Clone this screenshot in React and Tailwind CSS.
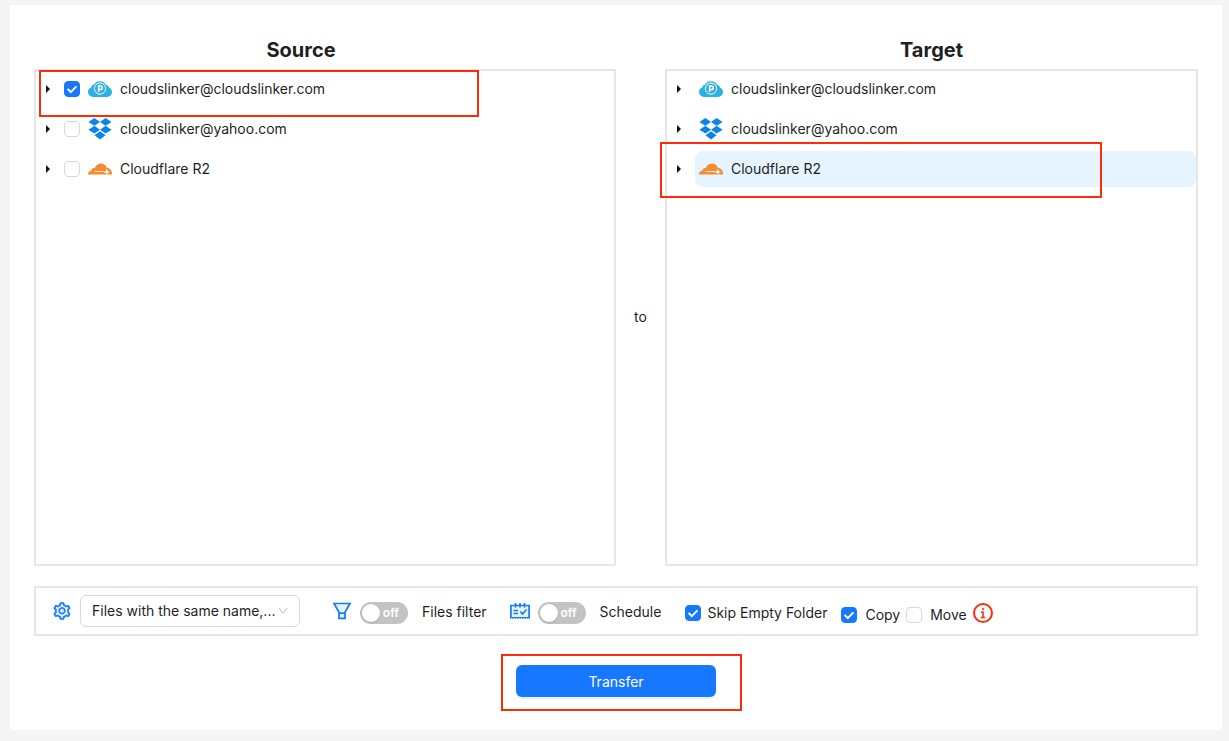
import React, { useState } from 'react';
import { AiOutlineSetting, AiOutlineDown } from 'react-icons/ai';

const accounts = [
  { id: 'pcloud', name: 'cloudslinker@cloudslinker.com', Icon: PCloudIcon },
  { id: 'dropbox', name: 'cloudslinker@yahoo.com', Icon: DropboxIcon },
  { id: 'r2', name: 'Cloudflare R2', Icon: CloudflareIcon },
];

function PCloudIcon() {
  return (
    <svg viewBox="0 0 24 16" className="h-4 w-6 shrink-0" aria-hidden="true">
      <path
        fill="#2bb1e6"
        d="M5 16a5 5 0 0 1-5-4.800C0 8.600 1.500 7 3.300 6.600 3.200 4.800 4.400 3.700 6 3.800A6.600 6.600 0 0 1 12 .2a6.600 6.600 0 0 1 6 3.700c1.700-.1 3 1 2.900 2.800C22.700 7.200 24 8.800 24 11a5 5 0 0 1-5 5Z"
      />
      <circle cx="12" cy="7.600" r="5.600" fill="none" stroke="#fff" strokeWidth="1" />
      <path
        fill="none"
        stroke="#fff"
        strokeWidth="1.500"
        d="M10.600 11V5h1.900a1.800 1.800 0 0 1 0 3.600h-1.900"
      />
    </svg>
  );
}

function DropboxIcon() {
  return (
    <svg viewBox="0 0 24 22" className="h-[22px] w-6 shrink-0" aria-hidden="true">
      <path
        fill="#0a84ea"
        d="M6.400 0 12 3.900 6.400 7.800.4 3.900ZM17.600 0l6 3.900-6 3.900L12 3.900ZM.4 11.700l6-3.900 5.600 3.900-5.600 3.900ZM17.600 7.800l6 3.900-6 3.900-5.600-3.900ZM6.500 17.200 12 13.200l5.600 4-5.600 4.300Z"
      />
    </svg>
  );
}

function CloudflareIcon() {
  return (
    <svg viewBox="0 0 24 12" className="h-3 w-6 shrink-0" aria-hidden="true">
      <path
        fill="#f68a33"
        d="M0 11.600C-.1 9 1.400 7.600 3.700 7.400 3.400 5.700 5 4.600 6.600 5.200 7.700 2 10.200.4 13 .4c2.900 0 5 1.700 5.800 4.300 3 .2 5 2.500 5.200 5.600v1.300Z"
      />
      <path fill="none" stroke="#fff" strokeWidth=".8" d="M6.500 8.500h10" />
      <path fill="#fff" d="m18.800 5.400.7 2.700 2.700.5-2.500 1.100-.3 2.300-1.200-1.900-2.600-.5 2.200-1.300Z" />
    </svg>
  );
}

function SettingIcon() {
  return (
    <span className="relative flex size-5 text-[#1677ff]">
      <span className="absolute inset-1 rounded-full bg-[#e6f4ff]" />
      <AiOutlineSetting className="relative size-5" stroke="currentColor" strokeWidth="20" />
    </span>
  );
}

function FilterIcon() {
  return (
    <svg viewBox="0 0 20 20" className="size-5" fill="none" stroke="#1677ff" strokeWidth="1.700" aria-hidden="true">
      <path fill="#e6f4ff" d="M2 2.500h16l-5 8.800v6H7v-6Z" />
      <path d="M7 12.200h6" />
    </svg>
  );
}

function ScheduleIcon() {
  return (
    <svg viewBox="0 0 20 20" className="size-5" fill="none" stroke="#1677ff" strokeWidth="1.700" aria-hidden="true">
      <path fill="#e6f4ff" d="M.9 4.500h18.200v12.300H.9Z" />
      <path d="M5.500 2v4.500M10 2v4.500M14.500 2v4.500M3.500 9.500H8M3.500 12.500H8m2.300-2 2.200 2.500 4-4.500" />
      <path stroke="#fff" strokeWidth="1" strokeDasharray="1 1.500" d="M1 17.500h18" />
    </svg>
  );
}

function InfoIcon() {
  return (
    <svg viewBox="0 0 20 20" className="size-5" fill="none" stroke="#fb2c06" strokeWidth="2" aria-hidden="true">
      <circle cx="10" cy="10" r="9" />
      <path d="M10 5v2M8 9h2v5.500M7.800 14.500h4.400" strokeWidth="1.600" />
    </svg>
  );
}

function Checkbox({ id, label, ...props }) {
  return (
    <span className="relative flex size-4 shrink-0">
      <input
        id={id}
        type="checkbox"
        aria-label={label}
        className="peer size-4 appearance-none rounded border border-[#d9d9d9] bg-white checked:border-[#1677ff] checked:bg-[#1677ff]"
        {...props}
      />
      <svg
        viewBox="0 0 16 16"
        className="pointer-events-none absolute inset-0 hidden peer-checked:block"
        fill="none"
        stroke="#fff"
        strokeWidth="2"
        aria-hidden="true"
      >
        <path d="m3.600 7.900 3.200 3.200 5.600-5.700" />
      </svg>
    </span>
  );
}

function Switch({ id }) {
  const [on, setOn] = useState(false);

  return (
    <button
      id={id}
      type="button"
      role="switch"
      aria-checked={on}
      onClick={() => setOn(!on)}
      className={`flex h-[22px] w-12 items-center justify-between rounded-full pr-[9px] pl-0.5 text-xs font-semibold text-white ${
        on ? 'flex-row-reverse bg-[#1677ff]' : 'bg-[#c4c3c2]'
      }`}
    >
      <span className="size-[18px] rounded-full bg-white shadow" />
      <span>{on ? 'on' : 'off'}</span>
    </button>
  );
}

function TreeRow({ account, checkable, checked, onCheck, selected, onSelect }) {
  const { name, Icon } = account;

  return (
    <li className="flex h-9 items-center gap-1">
      <button type="button" aria-label={`Expand ${name}`} className="flex w-6 shrink-0 justify-center">
        <svg viewBox="0 0 4 8" className="h-2 w-1" aria-hidden="true">
          <path fill="#111" d="M0 0 4 4 0 8Z" />
        </svg>
      </button>
      {checkable && <Checkbox label={name} checked={checked} onChange={onCheck} />}
      <button
        type="button"
        onClick={onSelect}
        className={`flex h-9 flex-1 items-center gap-2 rounded-lg px-1 text-left ${
          selected ? 'bg-[#e6f4ff]' : ''
        }`}
      >
        <Icon />
        <span>{name}</span>
      </button>
    </li>
  );
}

function Highlight({ className }) {
  return <div className={`pointer-events-none absolute border-2 border-[#fb2c06] ${className}`} />;
}

function App() {
  const [sources, setSources] = useState(['pcloud']);
  const [target, setTarget] = useState('r2');
  const [skipEmpty, setSkipEmpty] = useState(true);
  const [mode, setMode] = useState('copy');

  const toggleSource = (id) => {
    setSources(sources.includes(id) ? sources.filter((s) => s !== id) : [...sources, id]);
  };

  return (
    <div className="min-h-screen bg-[#f5f5f5] pt-[5px] pr-[7px] pb-[11px] pl-2.5 font-[Inter,'Liberation_Sans',sans-serif] text-sm text-[#1f1f1f]">
      <main className="flex min-h-[calc(100vh-16px)] flex-col bg-white px-6 pt-[31px] pb-[33px]">
        <div className="flex flex-1">
          <section className="flex w-1/2 flex-col">
            <h2 className="pr-12 pb-[5px] text-center text-xl font-bold">Source</h2>
            <div className="relative flex-1 border-2 border-[#e5e5ea]">
              <ul className="flex flex-col gap-1">
                {accounts.map((account) => (
                  <TreeRow
                    key={account.id}
                    account={account}
                    checkable
                    checked={sources.includes(account.id)}
                    onCheck={() => toggleSource(account.id)}
                    onSelect={() => toggleSource(account.id)}
                  />
                ))}
              </ul>
              <Highlight className="-top-px left-[3px] h-[47px] w-[440px]" />
            </div>
          </section>

          <div className="flex w-[49px] items-center justify-center pt-8">to</div>

          <section className="flex flex-1 flex-col">
            <h2 className="pb-[5px] text-center text-xl font-bold">Target</h2>
            <div className="relative flex-1 border-2 border-[#e5e5ea]">
              <ul className="flex flex-col gap-1">
                {accounts.map((account) => (
                  <TreeRow
                    key={account.id}
                    account={account}
                    selected={target === account.id}
                    onSelect={() => setTarget(account.id)}
                  />
                ))}
              </ul>
              <Highlight className="top-[71px] -left-[7px] h-14 w-[442px]" />
            </div>
          </section>
        </div>

        <div className="mt-5 flex h-[50px] items-center border-2 border-[#e5e5ea] pl-4">
          <SettingIcon />
          <div className="relative ml-2">
            <select
              aria-label="Same name handling"
              className="h-8 w-[220px] appearance-none rounded-md border border-[#d9d9d9] bg-white pr-5 pl-[11px]"
            >
              <option>Files with the same name,...</option>
              <option>Overwrite</option>
            </select>
            <AiOutlineDown className="pointer-events-none absolute top-2.5 right-[11px] size-3 text-[#bfbfbf]" />
          </div>

          <div className="ml-8 flex items-center">
            <FilterIcon />
            <span className="ml-2 flex pt-1">
              <Switch id="files-filter" />
            </span>
            <label htmlFor="files-filter" className="ml-3.5 pt-0.5">Files filter</label>
          </div>

          <div className="ml-[23px] flex items-center">
            <ScheduleIcon />
            <span className="ml-2 flex pt-1">
              <Switch id="schedule" />
            </span>
            <label htmlFor="schedule" className="ml-3.5 pt-0.5">Schedule</label>
          </div>

          <div className="ml-6 flex items-center gap-1.5 pt-1">
            <Checkbox id="skip-empty" checked={skipEmpty} onChange={() => setSkipEmpty(!skipEmpty)} />
            <label htmlFor="skip-empty">Skip Empty Folder</label>
          </div>

          <div className="ml-3.5 flex items-center gap-1.5">
            <span className="flex items-center gap-2 pt-2">
              <Checkbox id="copy" checked={mode === 'copy'} onChange={() => setMode('copy')} />
              <label htmlFor="copy">Copy</label>
            </span>
            <span className="flex items-center gap-2 pt-2">
              <Checkbox id="move" checked={mode === 'move'} onChange={() => setMode('move')} />
              <label htmlFor="move">Move</label>
            </span>
            <span className="pt-1">
              <InfoIcon />
            </span>
          </div>
        </div>

        <div className="mt-[29px] flex justify-center">
          <div className="relative">
            <button
              type="button"
              className="block h-8 w-[200px] rounded-md bg-[#1677ff] pt-px text-white shadow-[0_2px_0_rgba(5,145,255,0.1)]"
            >
              Transfer
            </button>
            <Highlight className="-top-[11px] -left-[15px] h-[57px] w-[241px]" />
          </div>
        </div>
      </main>
    </div>
  );
}

export default App;
